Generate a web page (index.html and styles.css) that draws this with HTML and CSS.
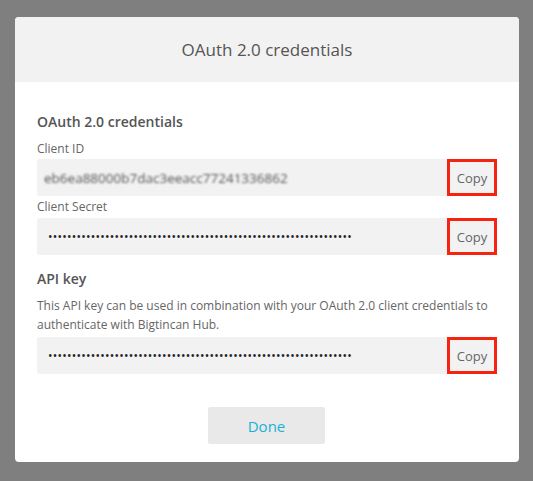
FILE: index.html
```html
<!DOCTYPE html>
<html lang="en">
<head>
    <meta charset="UTF-8">
    <title>OAuth 2.0 credentials</title>
    <link rel="stylesheet" href="styles.css">
</head>
<body>
    <div class="modal">
        <div class="modal-header">OAuth 2.0 credentials</div>

        <div class="modal-body">
            <h3>OAuth 2.0 credentials</h3>

            <label>Client ID</label>
            <div class="field">
                <span class="value blurred">eb6ea88000b7dac3eeacc77241336862</span>
                <button class="copy">Copy</button>
            </div>

            <label>Client Secret</label>
            <div class="field">
                <span class="value dots">••••••••••••••••••••••••••••••••••••••••••••••••••••••••••••••••</span>
                <button class="copy">Copy</button>
            </div>

            <h3 class="api">API key</h3>
            <p class="desc">This API key can be used in combination with your OAuth 2.0 client credentials to authenticate with Bigtincan Hub.</p>
            <div class="field">
                <span class="value dots">••••••••••••••••••••••••••••••••••••••••••••••••••••••••••••••••</span>
                <button class="copy">Copy</button>
            </div>

            <div class="actions">
                <button class="done">Done</button>
            </div>
        </div>
    </div>
</body>
</html>
```

FILE: styles.css
```css
body {
    margin: 0;
    height: 481px;
    background-color: #7f7f7f;
    font-family: "Open Sans", "Noto Sans", sans-serif;
    color: #555;
    overflow: hidden;
}

.modal {
    width: 504px;
    margin: 17px 0 0 15px;
    background: #fff;
    border-radius: 4px;
    overflow: hidden;
}

.modal-header {
    height: 65px;
    background: #f2f2f2;
    display: flex;
    align-items: center;
    justify-content: center;
    font-size: 17px;
    color: #555;
}

.modal-body {
    padding: 30px 23px 18px 22px;
}

h3 {
    margin: 0 0 9px;
    font-size: 14px;
    line-height: 20px;
    font-weight: 600;
    color: #555;
}

h3.api {
    margin: 14px 0 7px;
}

label {
    display: block;
    font-size: 12px;
    line-height: 16px;
    color: #666;
    margin-bottom: 2px;
}

.field + label {
    margin-top: 3px;
    margin-bottom: 3px;
}

.field {
    display: flex;
    align-items: center;
    height: 37px;
    background: #f2f2f2;
    border-radius: 2px;
}

.value {
    flex: 1;
    padding-left: 11px;
    font-size: 12px;
    color: #333;
    white-space: nowrap;
    overflow: hidden;
}

.blurred {
    padding-left: 7px;
    color: #555;
    font-size: 13.5px;
    filter: blur(1.2px);
}

.dots {
    font-size: 12px;
    letter-spacing: 0.24px;
    color: #222;
}

.copy {
    width: 50px;
    height: 37px;
    margin-right: -1px;
    box-sizing: border-box;
    border: 3px solid #f5230f;
    background: transparent;
    font-family: "Open Sans", "Noto Sans", sans-serif;
    font-size: 13px;
    color: #666;
    padding: 0;
}

.desc {
    margin: 0 0 3px;
    font-size: 12px;
    line-height: 19px;
    color: #666;
}

.actions {
    display: flex;
    justify-content: center;
    margin-top: 33px;
}

.done {
    width: 117px;
    height: 37px;
    border: none;
    border-radius: 2px;
    background: #e9e9e9;
    color: #1ab0d8;
    font-family: "Open Sans", "Noto Sans", sans-serif;
    font-size: 15px;
}
```
